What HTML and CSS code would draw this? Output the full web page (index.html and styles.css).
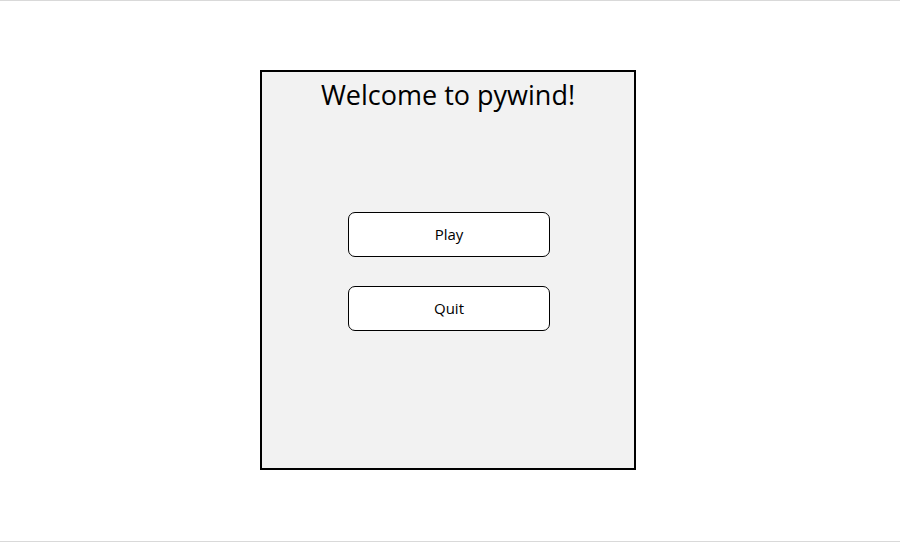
FILE: index.html
```html
<!DOCTYPE html>
<html>
<head>
<meta charset="utf-8">
<link rel="stylesheet" href="styles.css">
</head>
<body>
<div class="page">
  <div class="window">
    <h1 class="title">Welcome to pywind!</h1>
    <div class="menu">
      <button class="btn">Play</button>
      <button class="btn">Quit</button>
    </div>
  </div>
</div>
</body>
</html>
```
FILE: styles.css
```css
html, body {
  margin: 0;
  padding: 0;
  background: #ffffff;
}
.page {
  box-sizing: border-box;
  width: 900px;
  height: 542px;
  padding-right: 4px;
  border-top: 1px solid #d9d9d9;
  border-bottom: 1px solid #d9d9d9;
  display: flex;
  flex-direction: column;
  align-items: center;
  font-family: "Open Sans", "Noto Sans", sans-serif;
}
.window {
  box-sizing: border-box;
  width: 376px;
  height: 400px;
  margin-top: 69px;
  border: 2px solid #000;
  background: #f2f2f2;
  display: flex;
  flex-direction: column;
  align-items: center;
}
.title {
  margin: 5px 0 0 0;
  font-size: 27px;
  font-weight: 400;
  line-height: 36px;
  color: #000;
}
.menu {
  margin-top: 99px;
  display: flex;
  flex-direction: column;
  gap: 29px;
  padding-left: 2px;
}
.btn {
  box-sizing: border-box;
  width: 202px;
  height: 45px;
  border: 1px solid #000;
  border-radius: 7px;
  background: #fff;
  font-family: "Open Sans", "Noto Sans", sans-serif;
  font-size: 15px;
  color: #000;
  padding: 0 0 2px 0;
}
```
